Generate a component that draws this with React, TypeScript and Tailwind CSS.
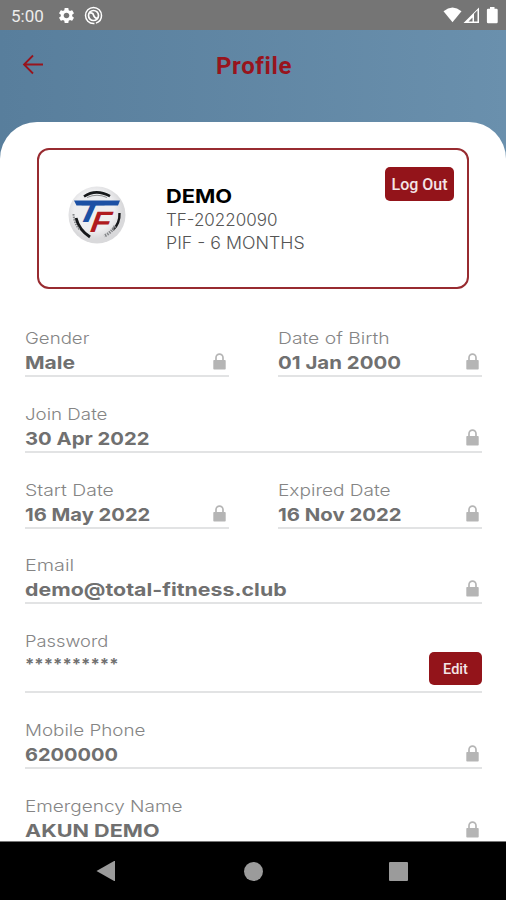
import { clsx } from 'clsx'
import { MdSettings } from 'react-icons/md'

function StatusBar() {
    return (
        <div className="flex h-[30px] shrink-0 items-center bg-[#757575] pl-[11px] pr-[7px] text-white">
            <span className="mt-0.5 w-[33px] whitespace-nowrap font-['Roboto',sans-serif] text-[17px] leading-none text-[#ececec]">5:00</span>
            <MdSettings className="ml-[13px] size-[19px]" />
            <svg className="ml-[8px] size-[19px]" viewBox="0 0 19 19" fill="none" stroke="currentColor">
                <circle cx="9.5" cy="9.5" r="8" strokeWidth="1.5" strokeDasharray="10 1.5 39" />
                <circle cx="9.5" cy="9.5" r="5" strokeWidth="1.7" />
                <path d="M5.5 7 Q9 6.5 9.5 9 Q10 11.5 13 12.5" strokeWidth="1.6" />
            </svg>
            <svg className="ml-auto h-[18px] w-[56px]" viewBox="0 0 56 18" fill="currentColor">
                <path d="M0.5 5.2 Q9.5 -2.2 18.5 5.2 L9.5 16.2 Z" />
                <path d="M20.5 17 L36 1.5 V17 Z M31 7.8 V15.5 H34.5 V4.3 Z" fillRule="evenodd" />
                <path d="M25.5 15.5 L29.5 11.5 V15.5 Z" fill="#757575" />
                <path d="M47 1 h4.5 v1.7 h2 q1.2 0 1.2 1.2 v12 q0 1.3 -1.2 1.3 h-8.4 q-1.2 0 -1.2 -1.3 v-12 q0 -1.2 1.2 -1.2 h1.9 z" />
            </svg>
        </div>
    )
}

function Logo() {
    return (
        <svg className="size-[60px] shrink-0" viewBox="0 0 60 60">
            <defs>
                <radialGradient id="disc" cx="45%" cy="42%">
                    <stop offset="0.7" stopColor="#eeeef0" />
                    <stop offset="1" stopColor="#d9d9db" />
                </radialGradient>
            </defs>
            <circle cx="30" cy="30" r="28.5" fill="url(#disc)" />
            <g fill="none" stroke="#16181a">
                <path d="M17 11.5 Q29 3.5 43 11.2" strokeWidth="2.6" />
                <path d="M20 12.5 Q30 8 40 12.5" stroke="#8b8d8f" strokeWidth="1" />
                <path d="M9 33 Q12 45 23 52" strokeWidth="3" />
                <path d="M6.5 29 Q7 39 13 45" stroke="#85878a" strokeWidth="2" strokeDasharray="1.5 1" />
                <path d="M52.5 28 Q53 38 46 45" strokeWidth="2.4" />
                <path d="M48 41 Q44 48 37 51" stroke="#85878a" strokeWidth="3" strokeDasharray="1.5 1" />
            </g>
            <path d="M7 15.5 H53 L51 20.5 H9.5 Z" fill="#1c50a4" />
            <text transform="translate(6.5 36.5) skewX(-24) scale(1.35 1)" fontFamily="Liberation Sans, sans-serif" fontWeight="700" fontSize="29" fill="#1c50a4">T</text>
            <text transform="translate(21 47.2) skewX(-20) scale(1.08 1)" fontFamily="Liberation Sans, sans-serif" fontWeight="700" fontSize="29.5" fill="#b01b20" stroke="#eeeef0" strokeWidth="1.2" paintOrder="stroke">F</text>
        </svg>
    )
}

function Lock() {
    return (
        <svg className="mr-[3px] mt-px h-[17px] w-[13px] shrink-0" viewBox="0 0 13 17">
            <path d="M3 8 V4.8 a3.5 3.7 0 0 1 7 0 V8" fill="none" stroke="#b5b5b5" strokeWidth="1.7" />
            <rect x="0.3" y="7" width="12.4" height="9.5" rx="0.8" fill="#b5b5b5" />
        </svg>
    )
}

interface FieldProps {
    label: string
    value: string
    labelClass?: string
    valueClass?: string
    className?: string
}

function Field({ label, value, labelClass, valueClass, className }: FieldProps) {
    return (
        <div className={clsx('h-[52px] border-b-2 border-[#e2e3e4]', className)}>
            <div className={clsx('h-6 origin-left whitespace-nowrap text-[16.5px] font-light leading-[26px] text-[#858585]', labelClass)}>{label}</div>
            <div className="flex h-6 items-center justify-between">
                <span className={clsx('mt-[4px] origin-left whitespace-nowrap text-[18px] font-bold leading-6 text-[#707070]', valueClass)}>{value}</span>
                <Lock />
            </div>
        </div>
    )
}

function MemberCard() {
    return (
        <section className="mx-[37px] flex h-[141px] items-start rounded-xl border-2 border-[#982b30] pl-[28px] pr-[13px]">
            <div className="mt-[35px]">
                <Logo />
            </div>
            <div className="ml-[39px] mt-[35px] whitespace-nowrap text-[17px] font-light leading-[23px] text-[#555]">
                <h2 className="mb-px origin-left scale-x-[1.18] text-[18.5px] font-bold text-black">DEMO</h2>
                <p>TF-20220090</p>
                <p className="origin-left scale-x-[1.045]">PIF - 6 MONTHS</p>
            </div>
            <button className="ml-auto mt-[17px] h-[34px] w-[69px] shrink-0 whitespace-nowrap rounded-[5px] bg-[#93141a] pt-0.5 font-['Roboto',sans-serif] text-[16px] font-medium text-[#f3e5e6]">Log Out</button>
        </section>
    )
}

function NavigationBar() {
    return (
        <nav className="flex h-[59px] shrink-0 items-center border-t border-[#777] bg-black text-[#9b9b9b]">
            <svg className="ml-[96px] size-[20px]" viewBox="0 0 20 20" fill="currentColor">
                <path d="M0.5 10 L19 -0.5 V20.5 Z" />
            </svg>
            <div className="ml-[128px] size-[19px] rounded-full bg-current" />
            <div className="ml-[126px] size-[19px] rounded-[1px] bg-current" />
        </nav>
    )
}

export default function App() {
    return (
        <div className="flex h-[900px] w-[506px] flex-col overflow-hidden bg-white font-['Inter',sans-serif]">
            <StatusBar />
            <div className="flex min-h-0 flex-1 flex-col bg-linear-to-r from-[#587e9c] to-[#6a90ad]">
                <header className="flex h-[92px] shrink-0 items-start px-[22px] pt-[24px] text-[#98141d]">
                    <svg className="size-[22px]" viewBox="0 0 22 22" fill="none" stroke="currentColor" strokeWidth="1.8">
                        <path d="M21 10.5 H2 M11 1.5 L2 10.5 L11 19.5" />
                    </svg>
                    <h1 className="flex-1 pr-[20px] text-center font-['Roboto',sans-serif] text-[24px] font-bold leading-[24px] tracking-[0.6px]">Profile</h1>
                </header>
                <main className="min-h-0 flex-1 overflow-hidden rounded-t-[37px] bg-white pt-[26px]">
                    <MemberCard />
                    <div className="flex flex-col gap-6 pl-[25px] pr-[24px] pt-[36px]">
                        <div className="flex gap-[49px]">
                            <Field className="flex-1" label="Gender" value="Male" labelClass="scale-x-[1.13]" valueClass="scale-x-[1.17]" />
                            <Field className="flex-1" label="Date of Birth" value="01 Jan 2000" labelClass="scale-x-[1.17]" valueClass="scale-x-[1.135]" />
                        </div>
                        <Field label="Join Date" value="30 Apr 2022" labelClass="scale-x-[1.135]" valueClass="scale-x-[1.127]" />
                        <div className="flex gap-[49px]">
                            <Field className="flex-1" label="Start Date" value="16 May 2022" labelClass="scale-x-[1.175]" valueClass="scale-x-[1.12]" />
                            <Field className="flex-1" label="Expired Date" value="16 Nov 2022" labelClass="scale-x-[1.155]" valueClass="scale-x-[1.13]" />
                        </div>
                        <Field className="-mt-px" label="Email" value="demo@total-fitness.club" labelClass="scale-x-[1.2]" valueClass="scale-x-[1.186]" />
                        <div className="flex h-[65px] items-start justify-between border-b-2 border-[#e2e3e4]">
                            <div className="text-[#858585]">
                                <div className="h-6 origin-left scale-x-[1.11] text-[16.5px] font-light leading-[26px]">Password</div>
                                <div className="origin-left scale-x-[1.045] text-[16px] font-bold leading-[24px] text-[#707070]">**********</div>
                            </div>
                            <button className="mt-[24px] h-[33px] w-[53px] rounded-[5px] bg-[#93141a] pt-0.5 font-['Roboto',sans-serif] text-[14.5px] font-medium text-[#f3e5e6]">Edit</button>
                        </div>
                        <Field label="Mobile Phone" value="6200000" labelClass="scale-x-[1.14]" valueClass="scale-x-[1.11]" />
                        <Field label="Emergency Name" value="AKUN DEMO" labelClass="scale-x-[1.15]" valueClass="scale-x-[1.2]" />
                    </div>
                </main>
            </div>
            <NavigationBar />
        </div>
    )
}
